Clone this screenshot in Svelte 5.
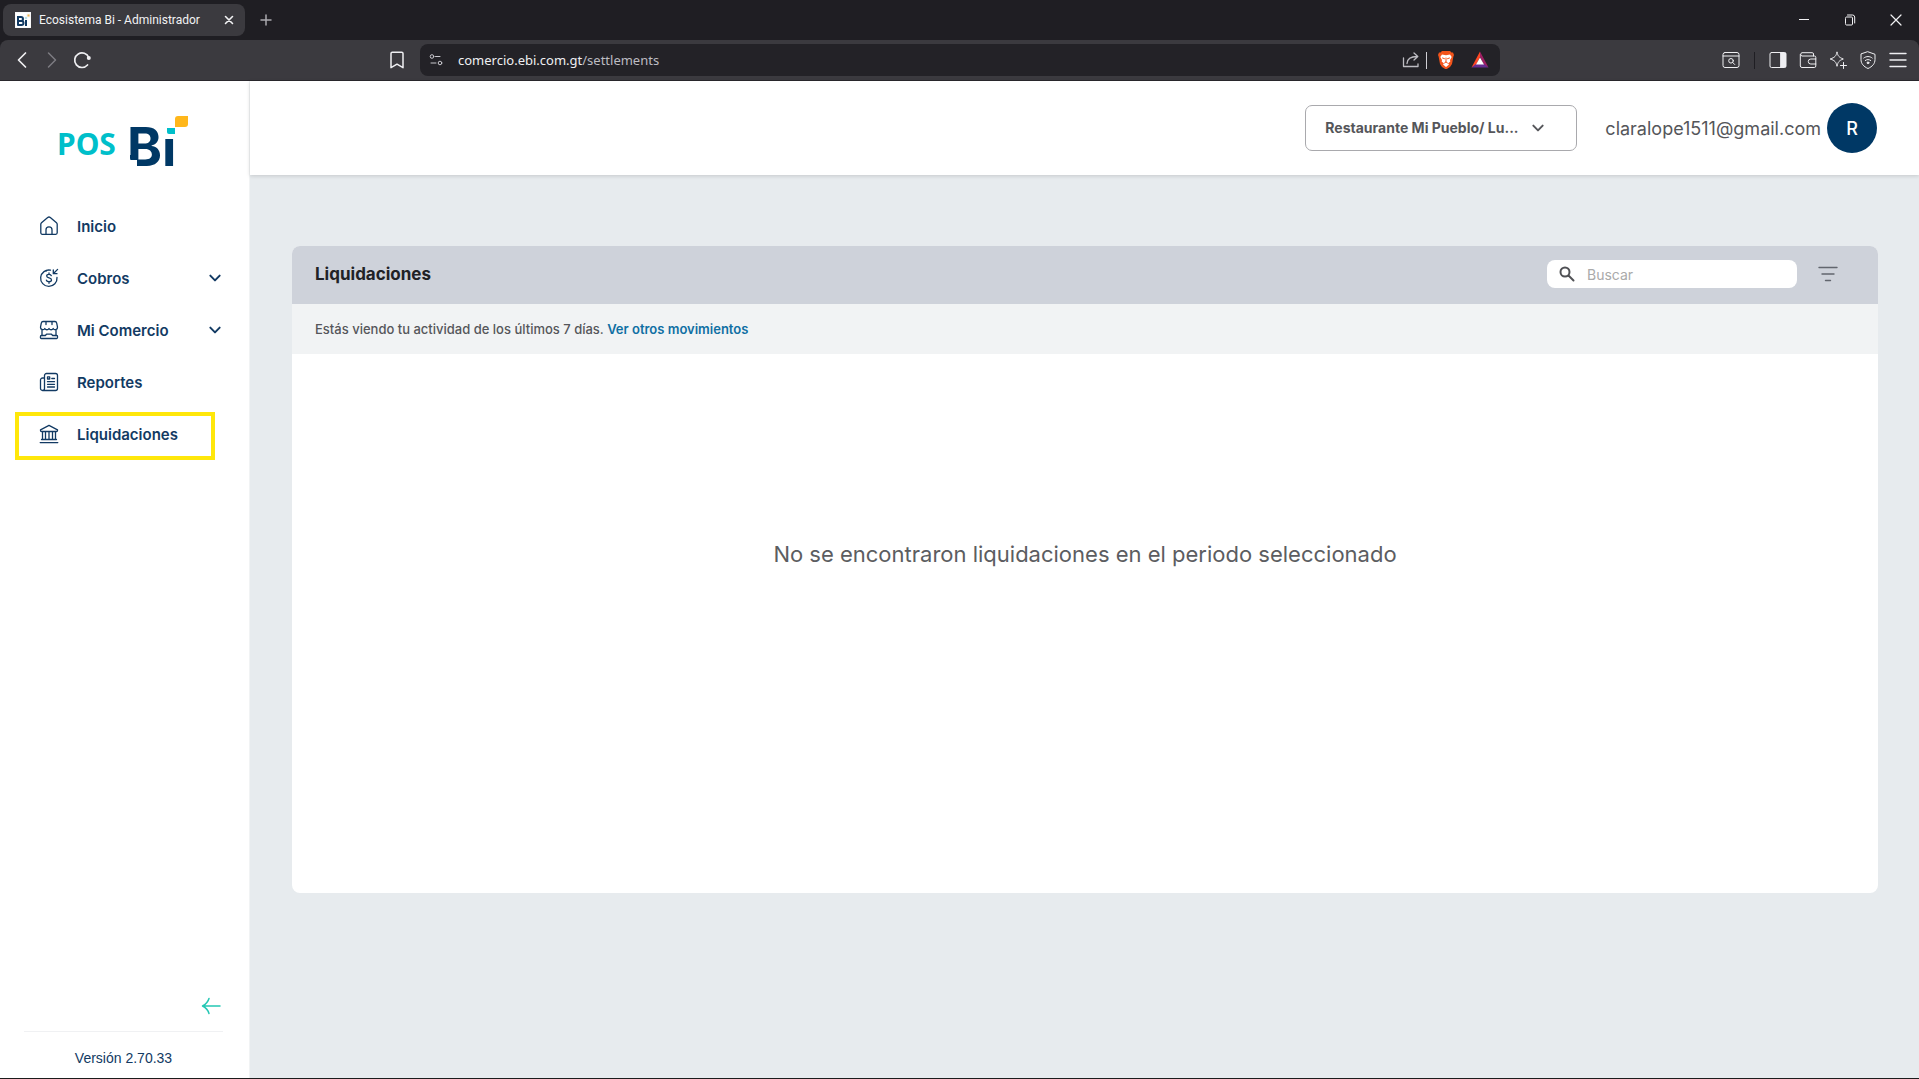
<script>
  const items = [
    { label: 'Inicio', icon: 'home' },
    { label: 'Cobros', icon: 'money', group: true },
    { label: 'Mi Comercio', icon: 'store', group: true },
    { label: 'Reportes', icon: 'report' },
    { label: 'Liquidaciones', icon: 'bank', active: true }
  ];
  let query = $state('');
</script>

{#snippet glyph(name)}
  <svg class="glyph" viewBox="0 0 20 20" aria-hidden="true">
    {#if name === 'home'}
      <path d="M1.800 8.200a2 2 0 0 1 .7-1.500l6.200-5.100a2 2 0 0 1 2.600 0l6.200 5.100a2 2 0 0 1 .7 1.500v8.600a1.500 1.500 0 0 1-1.500 1.500H3.300a1.500 1.500 0 0 1-1.500-1.500z" />
      <path d="M7 18v-4.200a3 3 0 0 1 6 0V18" />
    {:else if name === 'money'}
      <path d="M11.500 2.200A8.200 8.200 0 1 0 18 9.500M7 3.100A8 8 0 0 1 9 2.200" />
      <path d="M12.300 7.700c-.3-.9-1.200-1.300-2.300-1.300-1.400 0-2.300.7-2.300 1.700 0 2.400 4.800 1.300 4.800 3.800 0 1.100-1 1.800-2.500 1.800-1.300 0-2.300-.5-2.600-1.500M10 4.800v1.500M10 13.800v1.500" />
      <path d="M18.600 1.400 14.500 5.500M14.300 2v3.700H18" />
    {:else if name === 'store'}
      <path d="M4 1.500h12c1 0 1.500.8 1.700 1.700l.8 4a2.300 2.300 0 0 1-4.300 1.300 2.400 2.400 0 0 1-4.200 0 2.400 2.400 0 0 1-4.200 0A2.300 2.300 0 0 1 1.500 7.200l.8-4C2.500 2.300 3 1.500 4 1.500zM7 1.500v3M13 1.500v3M3 9.500v6M17 9.500v6" />
      <path d="M2.300 15.500h4l1.200-1.300h5l1.200 1.300h4c.6 0 .9.600.9 1.500s-.3 1.500-.9 1.500H2.300c-.6 0-.9-.6-.9-1.500s.3-1.500.9-1.500z" />
    {:else if name === 'report'}
      <path d="M5.500 15.500V3.500a2 2 0 0 1 2-2h9a2 2 0 0 1 2 2v13a2 2 0 0 1-2 2h-13a2 2 0 0 1-2-2V8a2 2 0 0 1 2-2h2M5.500 15v1.500a2 2 0 0 1-2 2" />
      <path d="M8.500 4.800h2.200V7H8.500zM12.800 6.500h2.700M8.500 9.700h7M8.500 12.300h7M8.500 15h7" />
    {:else}
      <path d="M1.500 6.500v-.7L10 1.400l8.500 4.400v.7a1 1 0 0 1-1 1h-15a1 1 0 0 1-1-1zM3.500 7.800V15M6.500 7.800V15M10 7.800V15M13.500 7.800V15M16.500 7.800V15M2.500 15.500h15M1.200 18.600h17.600" />
    {/if}
  </svg>
{/snippet}

{#snippet chevron()}
  <svg class="chev" viewBox="0 0 12 12" aria-hidden="true"><path d="m2 4 4 4 4-4" /></svg>
{/snippet}

<div class="window">
  <div class="tabs">
    <div class="tab">
      <svg class="fav" viewBox="0 0 16 16" aria-hidden="true">
        <path fill="#fff" d="M0 0h16v16H0z" />
        <path fill="none" stroke="#123a63" stroke-width="2" d="M3 5v8h3.500a2 2 0 0 0 0-4H3h3a2 2 0 0 0 0-4H2M11 8v6" />
        <path fill="#00b8c4" d="M10 5h2v2h-2z" /><path fill="#f2b64a" d="M12 2h3v3h-3z" />
      </svg>
      <span>Ecosistema Bi - Administrador</span>
      <button class="bare" aria-label="Cerrar pestaña"><svg class="s10" viewBox="0 0 10 10"><path stroke-width="1.600" d="m1.500 1.500 7 7m0-7-7 7" /></svg></button>
    </div>
    <button class="bare plus" aria-label="Nueva pestaña"><svg class="s12" viewBox="0 0 12 12"><path stroke-width="1.500" d="M6 1v10M1 6h10" /></svg></button>
    <div class="controls">
      <button class="bare" aria-label="Minimizar"><svg class="s10" viewBox="0 0 10 10"><path d="M0 4.500h10" /></svg></button>
      <button class="bare" aria-label="Restaurar"><svg class="s12" viewBox="0 0 12 12"><path d="M1.500 4a1 1 0 0 1 1-1h5a1 1 0 0 1 1 1v6a1 1 0 0 1-1 1h-5a1 1 0 0 1-1-1zM3.500 1h5A2.200 2.200 0 0 1 10.700 3v6" /></svg></button>
      <button class="bare" aria-label="Cerrar"><svg class="s12" viewBox="0 0 12 12"><path stroke-width="1.200" d="m1 1 10 10M11 1 1 11" /></svg></button>
    </div>
  </div>

  <div class="toolbar">
    <div class="nav-tools">
      <button class="bare" aria-label="Atrás"><svg viewBox="0 0 18 18"><path stroke-width="1.700" d="M12.500 2 5.500 9l7 7" /></svg></button>
      <button class="bare dim" aria-label="Adelante"><svg viewBox="0 0 18 18"><path stroke-width="1.500" d="m5.500 2 7 7-7 7" /></svg></button>
      <button class="bare" aria-label="Recargar"><svg viewBox="0 0 18 18"><path stroke-width="1.700" d="M14.500 14A7.300 7.300 0 1 1 15.800 6.500" /><circle cx="15.800" cy="7" r="2" fill="currentColor" stroke="none" /></svg></button>
      <button class="bare bookmark" aria-label="Marcador"><svg viewBox="0 0 18 18"><path stroke-width="1.500" d="M3 2.500A1.300 1.300 0 0 1 4.300 1.200h9.400A1.300 1.300 0 0 1 15 2.500v14.200L9 13.200l-6 3.500z" /></svg></button>
    </div>
    <div class="address">
      <svg class="tune" viewBox="0 0 14 14" aria-hidden="true"><circle cx="3" cy="3.500" r="1.800" /><path d="M6.500 3.500H11M2 10h5" /><circle cx="11" cy="10" r="1.800" /></svg>
      <div class="url">comercio.ebi.com.gt<span>/settlements</span></div>
      <button class="bare share" aria-label="Compartir"><svg viewBox="0 0 18 18"><path stroke-width="1.300" d="M1.500 7v8.500H16V13M5 12.500c.3-4.500 3-7 10-7M12 2l3.800 3.500L12 9" /></svg></button>
      <i></i>
      <button class="bare brave" aria-label="Brave Shields"><svg viewBox="0 0 18 18"><path fill="#f2541b" stroke="none" d="m5 0-1.500 1.500H2L1 4l.6 1.500L3 13l2 3 4 2.500 4-2.500 2-3 1.400-7.500L17 4l-1-2.500h-1.500L13 0z" /><path fill="#fff" stroke="none" d="m5 3.500 4 .7 4-.7 1.700 2.500-1.700 3 .3 1.500L11 12.500l1 1-3 2.500-3-2.500 1-1-2.300-2L5 9 3.300 6z" /><path stroke="#f2541b" d="m5.500 7 2 .7M12.500 7l-2 .7M9 7v4l-1.500 1M9 11l1.500 1" /></svg></button>
      <button class="bare" aria-label="Brave Rewards"><svg viewBox="0 0 18 18"><path fill="#ff4724" stroke="none" d="M9 .5.500 16.500 5 14l4-8z" /><path fill="#9e1f63" stroke="none" d="m9 .5 8.500 16L13 14 9 6z" /><path fill="#662d91" stroke="none" d="M.5 16.500h17L13 13H5z" /><path fill="#fff" stroke="none" d="m9 6.500-4 7h8z" /></svg></button>
    </div>
    <div class="tools">
      <button class="bare" aria-label="Buscar en la página"><svg viewBox="0 0 18 18"><rect x="1" y="1.500" width="16" height="15" rx="2" /><path d="M1 5h16" /><circle cx="9" cy="9.800" r="2.300" /><path d="m10.700 11.500 2 2" /></svg></button>
      <i></i>
      <button class="bare" aria-label="Panel lateral"><svg viewBox="0 0 18 18"><rect x="1" y="1.500" width="16" height="15" rx="1.500" /><path fill="currentColor" d="M12 2h4.500v14H12z" /></svg></button>
      <button class="bare" aria-label="Cartera"><svg viewBox="0 0 18 18"><path d="M14.500 5V3a1.300 1.300 0 0 0-1.300-1.300H3A1.700 1.700 0 0 0 3 5h12.500A1.300 1.300 0 0 1 16.800 6.300v8.700a1.500 1.500 0 0 1-1.500 1.500H3A1.700 1.700 0 0 1 1.300 15V3.500M16.800 8h-5a2.500 2.500 0 0 0 0 5h5" /></svg></button>
      <button class="bare" aria-label="Leo"><svg viewBox="0 0 18 18"><path d="M8 1.300c1 3.900 2 5 6.300 6.700C10 9.600 9 10.800 8 15.300 7 10.800 6 9.600 1.200 8 6 6.300 7 5.200 8 1.300zM14.500 11.500v6M11.500 14.500h6" /></svg></button>
      <button class="bare" aria-label="VPN"><svg viewBox="0 0 18 18"><path d="m9 .8 7 2.500v5.200c0 4-2.500 7-7 9-4.500-2-7-5-7-9V3.300zM4.800 7c2.500-2 6-2 8.400 0M6.300 9.500c1.600-1.300 3.800-1.300 5.400 0" /><circle cx="9" cy="11.800" r=".9" fill="currentColor" /></svg></button>
      <button class="bare" aria-label="Menú"><svg viewBox="0 0 18 18"><path stroke-width="1.400" d="M1 2.500h16M1 9h16M1 15.500h16" /></svg></button>
    </div>
  </div>

  <div class="app">
    <aside>
      <svg class="logo" viewBox="0 0 132 68" role="img" aria-label="POS Bi">
        <text class="pos" x="-1" y="40">POS</text>
        <text class="bi" x="69" y="51">Bi</text>
        <path fill="#fff" d="M107 6h18v18h-18zM66 45h13v8H66z" />
        <path fill="#003865" d="M72 40h7v5h-5a2 2 0 0 1-2-2z" />
        <path fill="#00bfca" d="M109 13h8v6h-6a2 2 0 0 1-2-2z" />
        <path fill="#ffb71b" d="M120 1h10v8a3 3 0 0 1-3 3h-10V4a3 3 0 0 1 3-3z" />
      </svg>
      <nav>
        {#each items as item}
          {#if item.group}
            <button class="item" aria-expanded="false">{@render glyph(item.icon)}<span>{item.label}</span>{@render chevron()}</button>
          {:else}
            <a class="item" class:active={item.active} href="#{item.icon}">{@render glyph(item.icon)}<span>{item.label}</span></a>
          {/if}
        {/each}
      </nav>
      <button class="bare collapse" aria-label="Contraer menú"><svg viewBox="0 0 20 18"><path d="M19 9H2M8 1.500C7 5 4.500 7.500 1.500 9 4.500 10.500 7 13 8 16.500" /></svg></button>
      <div class="version">Versión 2.70.33</div>
    </aside>

    <div class="page">
      <header>
        <div class="picker">
          <select aria-label="Comercio"><option>Restaurante Mi Pueblo/ Lu...</option></select>
          {@render chevron()}
        </div>
        <div class="user"><span>claralope1511@gmail.com</span><button class="avatar">R</button></div>
      </header>
      <main>
        <section>
          <div class="head">
            <h1>Liquidaciones</h1>
            <label class="search">
              <svg viewBox="0 0 16 16" aria-hidden="true"><circle cx="6" cy="6" r="4.500" /><path d="m9.500 9.500 5 5" /></svg>
              <input type="search" placeholder="Buscar" aria-label="Buscar" bind:value={query} />
            </label>
            <button class="bare filter" aria-label="Filtrar"><svg viewBox="0 0 20 16"><path d="M1 1.500h18M4 8h12M7.500 14.500h5" /></svg></button>
          </div>
          <p class="note">Estás viendo tu actividad de los últimos 7 días. <a href="#otros">Ver otros movimientos</a></p>
          <p class="empty">No se encontraron liquidaciones en el periodo seleccionado</p>
        </section>
      </main>
    </div>
  </div>
</div>

<style>
  :global(body) { margin: 0; }
  * { box-sizing: border-box; }
  .window {
    min-height: 100vh;
    display: flex;
    flex-direction: column;
    background: #1f1e23;
    border-bottom: 1px solid #1c1c1c;
    font-family: Inter, "Liberation Sans", sans-serif;
  }
  svg { display: block; flex: none; fill: none; stroke: currentColor; stroke-linecap: round; stroke-linejoin: round; }
  button, input, select { font: inherit; color: inherit; }
  .bare { display: flex; align-items: center; justify-content: center; padding: 0; border: 0; background: none; color: inherit; }
  .s10 { width: 10px; height: 10px; }
  .s12 { width: 12px; height: 12px; }

  .tabs { display: flex; align-items: center; height: 40px; padding-left: 3px; color: #f2f2f4; }
  .tab {
    display: flex; align-items: center; gap: 8px;
    width: 242px; height: 32px; padding: 0 11px 0 12px;
    border-radius: 8px; background: #3b3a3f;
    font: 12px/16px Roboto, sans-serif;
  }
  .tab span { flex: 1; white-space: nowrap; }
  .fav { width: 16px; height: 16px; stroke-linecap: butt; }
  .plus { margin-left: 15px; color: #aaa9af; }
  .controls { display: flex; margin-left: auto; }
  .controls .bare { width: 46px; height: 40px; }

  .toolbar {
    display: grid; grid-template-columns: 420px 1fr 419px; align-items: center;
    height: 41px; border-bottom: 1px solid #2a282d; border-radius: 8px 8px 0 0;
    background: #3b3a3f; color: #efeff2;
  }
  .toolbar .bare { width: 30px; height: 30px; }
  .toolbar .bare svg { width: 18px; height: 18px; }
  .toolbar i { width: 1px; height: 17px; }
  .nav-tools { display: flex; padding: 0 8px 0 7px; }
  .nav-tools .bookmark { margin-left: auto; }
  .dim { color: #7d7c82; }
  .address {
    display: flex; align-items: center; height: 32px; padding: 0 5px 0 9px;
    border-radius: 8px; background: #232227; font: 13px/20px "Noto Sans", sans-serif;
  }
  .tune { width: 14px; height: 14px; color: #c9c8ce; }
  .url { flex: 1; padding-left: 15px; }
  .url span { color: #bdbcc2; }
  .share { color: #bdbcc2; }
  .address i { background: #cfced4; }
  .address .brave { margin: 0 4px; }
  .tools { display: flex; align-items: center; justify-content: flex-end; padding-right: 6px; }
  .tools i { margin: 0 8px; background: #1f1e23; }

  .app { flex: 1; display: flex; background: #e7ebee; }
  aside {
    display: flex; flex-direction: column; flex: none; width: 250px;
    border-right: 1px solid #f1f3f4; background: #fff; color: #123a63;
  }
  .logo { width: 132px; height: 68px; margin: 34px 0 21px 58px; stroke: none; }
  .pos { font: 700 30px "Noto Sans", sans-serif; fill: #00bfca; }
  .bi { font: 700 53px Inter, sans-serif; fill: #003865; }
  nav { display: flex; flex-direction: column; gap: 4px; padding: 0 23px 0 15px; }
  .item {
    display: flex; align-items: center; gap: 18px; height: 48px; padding: 0 0 4px 20px;
    border: 4px solid transparent; background: none; color: inherit;
    font-size: 15px; font-weight: 600; text-align: left; text-decoration: none;
  }
  .item span { flex: 1; }
  .active { margin-right: 11px; border-color: #ffe70a; }
  .glyph { width: 20px; height: 20px; stroke-width: 1.3; }
  .chev { width: 14px; height: 14px; stroke-width: 1.700; }
  .collapse { width: 20px; height: 18px; margin: auto 28px 16px auto; color: #25c7b4; }
  .collapse svg { width: 20px; height: 18px; stroke-width: 1.500; }
  .version {
    margin: 0 26px 0 24px; padding: 16px 0 10px; border-top: 1px solid #f0f1f3;
    text-align: center; font: 14px/20px "Liberation Sans", sans-serif;
  }

  .page { flex: 1; min-width: 0; }
  header {
    display: flex; align-items: center; justify-content: flex-end; gap: 28px;
    height: 94px; padding-right: 42px; background: #fff; color: #55565a;
    box-shadow: 0 1px 4px #00000026;
  }
  .picker { position: relative; width: 272px; }
  .picker select {
    width: 100%; height: 46px; padding: 0 46px 2px 19px; appearance: none;
    border: 1px solid #a9a9ad; border-radius: 7px; background: #fff;
    font-size: 14px; font-weight: 700;
  }
  .picker .chev { position: absolute; right: 32px; top: 16px; pointer-events: none; }
  .user { display: flex; align-items: center; gap: 6px; font-size: 18px; }
  .avatar { width: 50px; height: 50px; padding: 0; border: 0; border-radius: 50%; background: #003865; color: #fff; font-weight: 500; }
  main { padding: 71px 41px 71px 42px; }
  section { border-radius: 8px; background: #fff; overflow: hidden; }
  .head { display: flex; align-items: center; height: 58px; padding: 0 34px 2px 23px; background: #ced2da; }
  h1 { flex: 1; margin: 0; font-size: 17px; line-height: 24px; font-weight: 700; color: #212226; }
  .search { display: flex; align-items: center; gap: 12px; width: 250px; height: 28px; padding: 0 12px; border-radius: 8px; background: #fff; }
  .search svg { width: 16px; height: 16px; stroke-width: 2; color: #505155; }
  .search input { flex: 1; min-width: 0; padding: 0; border: 0; outline: 0; background: none; font-size: 14px; }
  .search input::placeholder { color: #aaa; }
  .filter { width: 32px; height: 32px; margin-left: 15px; color: #62666e; }
  .filter svg { width: 20px; height: 16px; stroke-width: 1.400; }
  .note { margin: 0; padding: 15px 23px; background: #f1f3f4; font-size: 13px; line-height: 20px; font-weight: 500; color: #55565a; }
  .note a { color: #0f6fa3; font-weight: 600; text-decoration: none; }
  .empty { margin: 0; padding: 184px 24px 323px; text-align: center; font-size: 22px; line-height: 32px; color: #5c5d61; }
</style>
